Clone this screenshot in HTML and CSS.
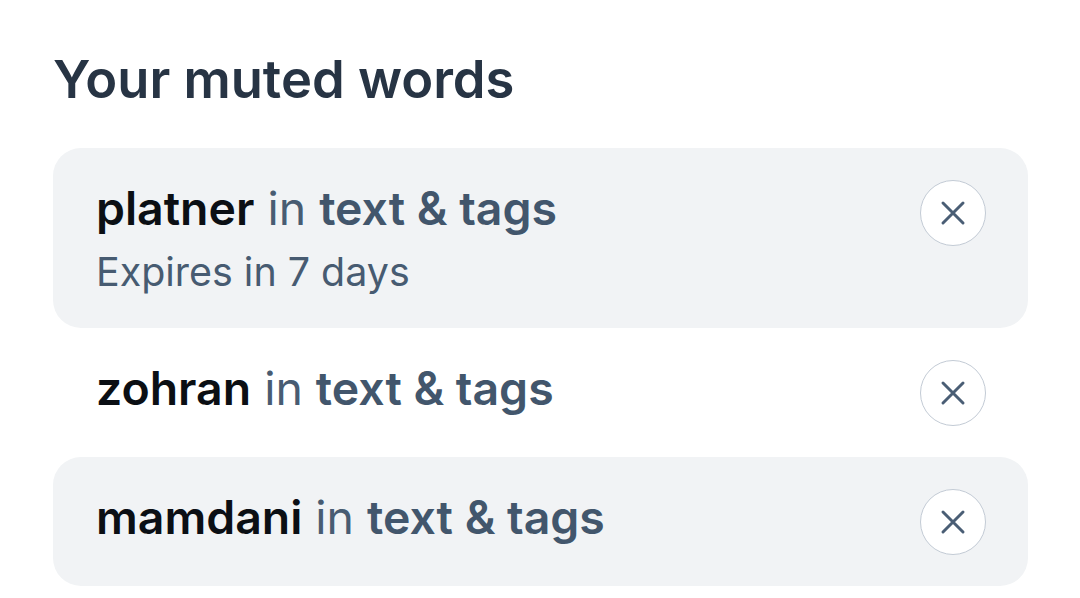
FILE: index.html
```html
<!DOCTYPE html>
<html lang="en">
<head>
<meta charset="utf-8">
<title>Your muted words</title>
<link rel="stylesheet" href="styles.css">
</head>
<body>
<main class="page">
  <h1 class="heading">Your muted words</h1>
  <ul class="list">
    <li class="row row--shaded">
      <div class="info">
        <div class="title"><span class="word">platner</span> <span class="in">in</span> <span class="target">text &amp; tags</span></div>
        <div class="expires">Expires in 7 days</div>
      </div>
      <button class="remove" aria-label="Remove">
        <svg viewBox="0 0 24 24"><path d="M4 4 L20 20 M20 4 L4 20" fill="none" stroke="currentColor" stroke-width="2.4" stroke-linecap="round"/></svg>
      </button>
    </li>
    <li class="row">
      <div class="info">
        <div class="title"><span class="word">zohran</span> <span class="in">in</span> <span class="target">text &amp; tags</span></div>
      </div>
      <button class="remove" aria-label="Remove">
        <svg viewBox="0 0 24 24"><path d="M4 4 L20 20 M20 4 L4 20" fill="none" stroke="currentColor" stroke-width="2.4" stroke-linecap="round"/></svg>
      </button>
    </li>
    <li class="row row--shaded">
      <div class="info">
        <div class="title"><span class="word">mamdani</span> <span class="in">in</span> <span class="target">text &amp; tags</span></div>
      </div>
      <button class="remove" aria-label="Remove">
        <svg viewBox="0 0 24 24"><path d="M4 4 L20 20 M20 4 L4 20" fill="none" stroke="currentColor" stroke-width="2.4" stroke-linecap="round"/></svg>
      </button>
    </li>
  </ul>
</main>
</body>
</html>
```

FILE: styles.css
```css
* { box-sizing: border-box; }

html, body {
  margin: 0;
  padding: 0;
  background: #ffffff;
}

body {
  font-family: Inter, "Noto Sans", "Liberation Sans", sans-serif;
  -webkit-font-smoothing: antialiased;
}

.page {
  padding: 45px 52px 0 53px;
}

.heading {
  margin: 0 0 34px;
  font-size: 52.5px;
  line-height: 69px;
  font-weight: 600;
  color: #273444;
}

.list {
  list-style: none;
  margin: 0;
  padding: 0;
  display: flex;
  flex-direction: column;
}

.row {
  display: flex;
  align-items: flex-start;
  justify-content: space-between;
  padding: 31.5px 42px 31.5px 43px;
  border-radius: 28px;
}

.row--shaded {
  background: #f1f3f5;
}

.info {
  display: flex;
  flex-direction: column;
  gap: 12px;
}

.title {
  font-size: 46.4px;
  line-height: 56px;
  white-space: nowrap;
}

.word {
  font-weight: 600;
  color: #0b0f14;
}

.in {
  font-weight: 400;
  color: #485c72;
}

.target {
  font-weight: 600;
  color: #42566c;
}

.expires {
  font-size: 39.4px;
  line-height: 49px;
  color: #475b71;
}

.remove {
  flex: none;
  width: 66px;
  height: 66px;
  margin: 0;
  padding: 0;
  border: 1px solid #c3cbd5;
  border-radius: 50%;
  background: #ffffff;
  color: #4a5e75;
  display: flex;
  align-items: center;
  justify-content: center;
}

.remove svg {
  width: 30px;
  height: 30px;
}
```
